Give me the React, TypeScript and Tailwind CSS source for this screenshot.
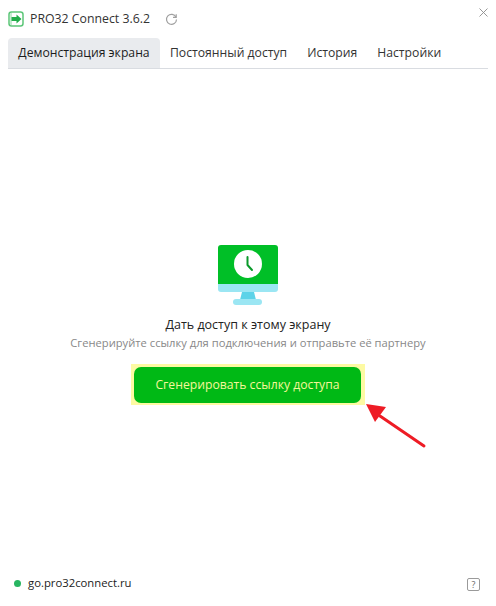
const font = { fontFamily: '"Open Sans", "Noto Sans", sans-serif' };

const tabs = ["Демонстрация экрана", "Постоянный доступ", "История", "Настройки"];

function Logo() {
  return (
    <svg width="16" height="16" viewBox="0 0 16 16" fill="none">
      <rect x="1" y="1" width="14" height="14" rx="2.5" stroke="#5cc678" strokeWidth="1.5" fill="#fff" />
      <rect x="2" y="2" width="2" height="12" fill="#c5ecd0" />
      <path d="M3.5 6h5V3.5L13.5 8l-5 4.5V10h-5z" fill="#22ad4a" />
    </svg>
  );
}

function Monitor() {
  return (
    <svg width="60" height="60" viewBox="0 0 60 60" fill="none">
      <path d="M3 0h54a3 3 0 0 1 3 3v36H0V3a3 3 0 0 1 3-3z" fill="#00bf27" />
      <path d="M0 39h60v5a3 3 0 0 1-3 3H3a3 3 0 0 1-3-3z" fill="#9be6f3" />
      <path d="M24 47h12l2 8H22z" fill="#5cd3e8" />
      <rect x="15" y="54" width="29" height="6" rx="3" fill="#9be6f3" />
      <circle cx="30" cy="19" r="14" fill="#fff" />
      <path d="M29.5 12v8l4.5 5" stroke="#0a9a2a" strokeWidth="2" strokeLinecap="round" strokeLinejoin="round" />
    </svg>
  );
}

export default function App() {
  return (
    <div className="relative flex h-[606px] w-[496px] flex-col overflow-hidden bg-white text-[#1f1f1f]" style={font}>
      <header className="flex h-[38px] items-center px-2">
        <Logo />
        <span className="ml-[6px] text-[12.3px] text-[#333]">PRO32 Connect 3.6.2</span>
        <svg className="ml-[15px]" width="13" height="13" viewBox="0 0 13 13" fill="none" stroke="#a0a0a0" strokeWidth="1.2">
          <path d="M11 4.2A5 5 0 1 0 11.5 6.5" />
          <path d="M11.2 1.2v3.2H8" />
        </svg>
        <svg className="mb-[13px] ml-auto" width="9" height="9" viewBox="0 0 9 9" stroke="#8c8c8c" strokeWidth="0.9">
          <path d="M.5.5l8 8M8.5.5l-8 8" />
        </svg>
      </header>

      <nav className="mx-2 flex h-[31px] border-b border-[#d9dce1] text-[12.2px]">
        {tabs.map((tab, i) => (
          <div
            key={tab}
            className={
              i === 0
                ? "flex h-[30px] w-[152px] items-center justify-center rounded-t-[4px] bg-[#e9ebee] text-[#1c1c1c]"
                : "flex h-[30px] items-center px-[10px] text-[#333] first-of-type:ml-0"
            }
          >
            {tab}
          </div>
        ))}
      </nav>

      <main className="flex flex-1 flex-col items-center pt-[176px]">
        <Monitor />
        <p className="mt-[11px] text-[12.5px] leading-[17px] text-[#222]">Дать доступ к этому экрану</p>
        <p className="mt-[2px] text-[11.2px] leading-[15px] text-[#888]">
          Сгенерируйте ссылку для подключения и отправьте её партнеру
        </p>
        <div className="mt-[14px] bg-[#fdfaa3] pb-[2px] pl-[3px] pr-[4px] pt-[3px]">
          <button className="flex h-[36px] w-[227px] items-center justify-center rounded-[7px] bg-[#00b915] text-[12.2px] text-[#f6f69a]">
            Сгенерировать ссылку доступа
          </button>
        </div>
      </main>

      <footer className="flex h-[38px] items-start px-[14px] pt-[6px]">
        <span className="mt-[6px] h-[7px] w-[7px] rounded-full bg-[#27b561]" />
        <span className="ml-[7px] text-[11.3px] leading-[18px] text-[#222]">go.pro32connect.ru</span>
        <span className="ml-auto mr-[2px] mt-[4px] flex h-[13px] w-[13px] items-center justify-center rounded-[2px] border-[1.5px] border-[#9a9a9a] text-[9px] leading-none text-[#666]">
          ?
        </span>
      </footer>

      <svg className="absolute left-[364px] top-[403px]" width="66" height="50" viewBox="0 0 66 50" fill="none">
        <path d="M60 43L16 13" stroke="#ee1c25" strokeWidth="3" strokeLinecap="round" />
        <path d="M2 1l20 3-11 15z" fill="#ee1c25" />
      </svg>
    </div>
  );
}
